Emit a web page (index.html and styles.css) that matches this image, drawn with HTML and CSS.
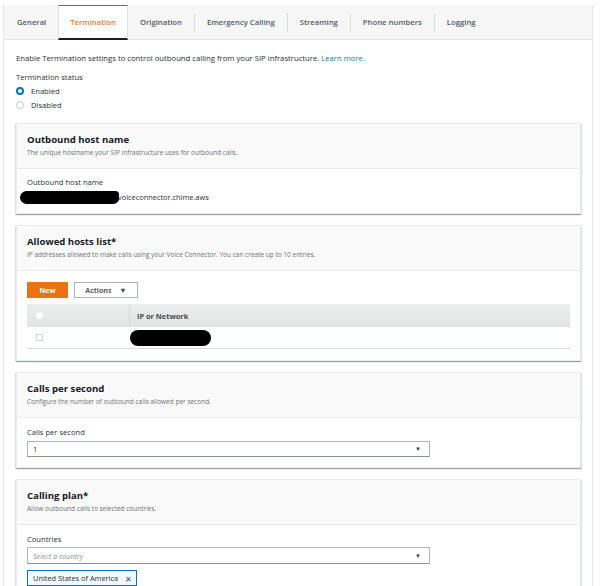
FILE: index.html
```html
<!DOCTYPE html>
<html lang="en">
<head>
<meta charset="utf-8">
<title>Voice Connector - Termination</title>
<link rel="stylesheet" href="styles.css">
</head>
<body>
<div class="page">
  <nav class="tabs">
    <div class="tab">General</div>
    <div class="tab active">Termination</div>
    <div class="tab">Origination</div>
    <span class="sep"></span>
    <div class="tab">Emergency Calling</div>
    <span class="sep"></span>
    <div class="tab">Streaming</div>
    <span class="sep"></span>
    <div class="tab">Phone numbers</div>
    <span class="sep"></span>
    <div class="tab">Logging</div>
  </nav>
  <div class="content">
    <p class="intro">Enable Termination settings to control outbound calling from your SIP infrastructure. <a class="link" href="#">Learn more.</a></p>
    <div class="status">
      <div class="status-label">Termination status</div>
      <div class="radio"><span class="dot dot-on"></span>Enabled</div>
      <div class="radio"><span class="dot"></span>Disabled</div>
    </div>

    <section class="card">
      <header class="card-head">
        <h2 class="card-title">Outbound host name</h2>
        <div class="card-sub">The unique hostname your SIP infrastructure uses for outbound calls.</div>
      </header>
      <div class="card-body body-host">
        <div class="label">Outbound host name</div>
        <div class="value"><span class="redact redact-host"></span><span class="host-text">voiceconnector.chime.aws</span></div>
      </div>
    </section>

    <section class="card">
      <header class="card-head">
        <h2 class="card-title">Allowed hosts list*</h2>
        <div class="card-sub">IP addresses allowed to make calls using your Voice Connector. You can create up to 10 entries.</div>
      </header>
      <div class="card-body body-hosts">
        <div class="actions">
          <button class="btn btn-primary">New</button>
          <button class="btn btn-normal">Actions <span class="caret">&#9660;</span></button>
        </div>
        <div class="table">
          <div class="thead">
            <div class="cell cell-check"><span class="check check-head"></span></div>
            <div class="cell cell-ip">IP or Network</div>
          </div>
          <div class="trow">
            <div class="cell cell-check"><span class="check"></span></div>
            <div class="cell cell-ip-row"><span class="redact redact-ip"></span></div>
          </div>
        </div>
      </div>
    </section>

    <section class="card">
      <header class="card-head">
        <h2 class="card-title">Calls per second</h2>
        <div class="card-sub">Configure the number of outbound calls allowed per second.</div>
      </header>
      <div class="card-body body-field">
        <div class="label">Calls per second</div>
        <div class="select"><span class="select-value">1</span><span class="select-arrow">&#9660;</span></div>
      </div>
    </section>

    <section class="card">
      <header class="card-head">
        <h2 class="card-title">Calling plan*</h2>
        <div class="card-sub">Allow outbound calls to selected countries.</div>
      </header>
      <div class="card-body body-field">
        <div class="label">Countries</div>
        <div class="select select-country"><span class="placeholder">Select a country</span><span class="select-arrow">&#9660;</span></div>
        <div class="token">United States of America <span class="token-x">&#10005;</span></div>
      </div>
    </section>
  </div>
</div>
</body>
</html>
```

FILE: styles.css
```css
html, body {
  margin: 0;
  padding: 0;
  background: #ffffff;
}

body {
  font-family: "Open Sans", "Noto Sans", sans-serif;
  color: #2b2f33;
  overflow: hidden;
}

.page {
  margin: 5px 0 0 3px;
  width: 588px;
  min-height: 600px;
  border-left: 1px solid #e4e6e6;
  border-right: 1px solid #e4e6e6;
}

/* Tabs */
.tabs {
  display: flex;
  height: 34px;
  background: #f7f7f7;
  border-bottom: 1px solid #e3e5e5;
  align-items: stretch;
}

.tab {
  display: flex;
  align-items: center;
  padding: 0 12px;
  font-size: 7.7px;
  font-weight: 600;
  color: #545b64;
  white-space: nowrap;
}

.tab:first-child {
  padding-left: 13px;
}

.tab.active {
  background: #ffffff;
  color: #ec7a35;
  padding: 0 11px;
  border-left: 1px solid #dfe2e2;
  border-right: 1px solid #dfe2e2;
  border-top: 1px solid #2b8a7c;
  border-bottom: 2px solid #1b1f24;
  margin-bottom: -1px;
}

.sep {
  width: 1px;
  height: 19px;
  align-self: center;
  background: #d8dcdc;
}

/* Content */
.content {
  padding: 0 11px 0 12px;
}

.intro {
  margin: 0;
  padding-top: 12px;
  font-size: 7.7px;
  line-height: 12px;
  color: #2b2f33;
}

.link {
  color: #1a7a8e;
  text-decoration: none;
}

.status {
  margin-top: 7px;
  font-size: 7.6px;
}

.status-label {
  line-height: 12px;
  margin-bottom: 1px;
}

.radio {
  display: flex;
  align-items: center;
  height: 14px;
  line-height: 14px;
}

.dot {
  box-sizing: border-box;
  width: 8px;
  height: 8px;
  border-radius: 50%;
  border: 1px solid #c6cbcb;
  background: #ffffff;
  margin: 0 7px 0 0;
}

.dot-on {
  border: 2.5px solid #0b73b5;
}

/* Cards */
.card {
  margin-top: 11px;
  border: 1px solid #eaeded;
  background: #ffffff;
  box-shadow: 0 1px 1px 0 rgba(0, 28, 36, 0.25), 1px 1px 1px 0 rgba(0, 28, 36, 0.1), -1px 1px 1px 0 rgba(0, 28, 36, 0.1);
}

.card-head {
  background: #fafafa;
  border-bottom: 1px solid #eaeded;
  padding: 9px 10px 10px;
}

.card-title {
  margin: 0;
  font-size: 9.6px;
  line-height: 14px;
  font-weight: 700;
  color: #16191f;
}

.card-sub {
  margin-top: 1px;
  font-size: 6.5px;
  line-height: 10px;
  color: #6e7175;
}

.card-body {
  padding: 7px 10px 9px;
  font-size: 7.6px;
}

.label {
  line-height: 12px;
  color: #2b2f33;
}

.value {
  display: flex;
  align-items: center;
  height: 14px;
  margin-top: 2px;
  margin-left: -7px;
  font-size: 7.4px;
}

.redact {
  display: inline-block;
  background: #000000;
}

.redact-host {
  width: 99px;
  height: 13px;
  border-radius: 7px 4px 6px 7px;
}

.host-text {
  margin-left: -1px;
}

/* Allowed hosts */
.body-hosts {
  padding: 11px 10px 11px;
}

.actions {
  display: flex;
  gap: 6px;
}

.btn {
  font-family: inherit;
  font-size: 7px;
  font-weight: 700;
  height: 16px;
  padding: 0;
  cursor: pointer;
}

.btn-primary {
  width: 41px;
  background: #ec7211;
  border: 1px solid #ec7211;
  color: #ffffff;
}

.btn-normal {
  width: 64px;
  background: #ffffff;
  border: 1px solid #aab7b8;
  color: #545b64;
}

.caret {
  font-size: 7.5px;
  margin-left: 6px;
  color: #444b52;
}

.table {
  margin-top: 6px;
  border-bottom: 1px solid #d5dbdb;
}

.thead {
  display: flex;
  height: 23px;
  background: linear-gradient(#eceeee, #e2e4e4);
}

.trow {
  display: flex;
  height: 21px;
}

.cell {
  display: flex;
  align-items: center;
}

.cell-check {
  width: 103px;
  padding-left: 9px;
  box-sizing: border-box;
}

.thead .cell-check {
  border-right: 1px solid #d6d9d9;
}

.cell-ip {
  padding-left: 7px;
  font-weight: 700;
  font-size: 7.4px;
  color: #444b52;
}

.check {
  box-sizing: border-box;
  width: 7px;
  height: 7px;
  border: 1px solid #d2d6d6;
  background: #ffffff;
}

.check-head {
  border-color: #f3f3f3;
}

.redact-ip {
  width: 81px;
  height: 16px;
  border-radius: 8px;
}

/* Fields */
.body-field {
  padding: 8px 10px 10px;
}

.select {
  box-sizing: border-box;
  width: 403px;
  height: 16px;
  margin-top: 3px;
  border: 1px solid #aab7b8;
  border-bottom-color: #8a9596;
  display: flex;
  align-items: center;
  justify-content: space-between;
  padding: 0 8px 0 5px;
  background: #ffffff;
}

.select-value {
  color: #2b2f33;
}

.select-arrow {
  font-size: 6px;
  color: #3a3f44;
}

.select-country {
  height: 17px;
  margin-top: 2px;
}

.placeholder {
  font-style: italic;
  color: #879596;
  font-size: 7.2px;
}

.token {
  display: inline-flex;
  align-items: center;
  box-sizing: border-box;
  height: 16px;
  margin-top: 6px;
  padding: 0 4px 0 5px;
  border: 1px solid #0b73b5;
  background: #f1faff;
  color: #2b2f33;
  font-size: 7.4px;
}

.token-x {
  margin-left: 7px;
  font-size: 8px;
  color: #3a4a55;
}
```
